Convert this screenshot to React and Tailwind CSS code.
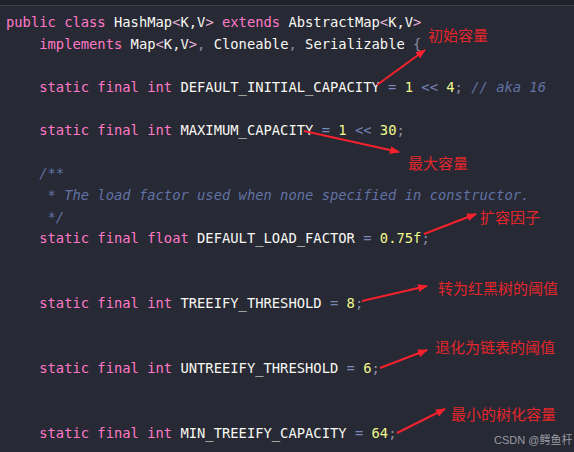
const K = "text-[#ff79c6]";
const I = "text-[#f8f8f2]";
const B = "text-[#e9b6d6]";
const P = "text-[#8b8fa3]";
const O = "text-[#7a86b8]";
const N = "text-[#f1fa8c]";
const C = "text-[#6272a4] italic";

const code = [
  [["public class ", K], ["HashMap", I], ["<", B], ["K,V", I], [">", B], [" extends ", K], ["AbstractMap", I], ["<", B], ["K,V", I], [">", B]],
  [["    implements ", K], ["Map", I], ["<", B], ["K,V", I], [">", B], [", ", P], ["Cloneable", I], [", ", P], ["Serializable ", I], ["{", P]],
  [],
  [["    static final int ", K], ["DEFAULT_INITIAL_CAPACITY ", I], ["= ", O], ["1 ", N], ["<< ", O], ["4", N], ["; ", P], ["// aka 16", C]],
  [],
  [["    static final int ", K], ["MAXIMUM_CAPACITY ", I], ["= ", O], ["1 ", N], ["<< ", O], ["30", N], [";", P]],
  [],
  [["    /**", C]],
  [["     * The load factor used when none specified in constructor.", C]],
  [["     */", C]],
  [["    static final float ", K], ["DEFAULT_LOAD_FACTOR ", I], ["= ", O], ["0.75f", N], [";", P]],
  [],
  [],
  [["    static final int ", K], ["TREEIFY_THRESHOLD ", I], ["= ", O], ["8", N], [";", P]],
  [],
  [],
  [["    static final int ", K], ["UNTREEIFY_THRESHOLD ", I], ["= ", O], ["6", N], [";", P]],
  [],
  [],
  [["    static final int ", K], ["MIN_TREEIFY_CAPACITY ", I], ["= ", O], ["64", N], [";", P]],
];

const notes = [
  { text: "初始容量", cls: "left-[428px] top-[25px]" },
  { text: "最大容量", cls: "left-[408px] top-[153px]" },
  { text: "扩容因子", cls: "left-[480px] top-[207px]" },
  { text: "转为红黑树的阈值", cls: "left-[438px] top-[278px]" },
  { text: "退化为链表的阈值", cls: "left-[435px] top-[337px]" },
  { text: "最小的树化容量", cls: "left-[451px] top-[404px]" },
];

const arrows = [
  [377, 85, 425, 50],
  [304, 131, 399, 152],
  [424, 234, 476, 214],
  [362, 301, 427, 286],
  [380, 368, 427, 350],
  [397, 433, 445, 409],
];

export default function App() {
  return (
    <div className="relative w-[574px] h-[452px] overflow-hidden bg-[#272935]">
      <div className="h-[6px] bg-[#1f2028] border-b border-[#3a3c47]" />
      <div className="pt-[6px] pl-[6px] font-['DejaVu_Sans_Mono',monospace] text-[13.8px] leading-[21.63px] whitespace-pre">
        {code.map((line, i) => (
          <div key={i} className="h-[21.63px]">
            {line.map(([t, c], j) => (
              <span key={j} className={c}>{t}</span>
            ))}
          </div>
        ))}
      </div>

      <svg className="absolute inset-0" width="574" height="452">
        <defs>
          <marker id="ah" markerWidth="10" markerHeight="8" refX="9" refY="4" orient="auto" markerUnits="userSpaceOnUse">
            <path d="M0,0 L10,4 L0,8 Z" fill="#f5222d" />
          </marker>
        </defs>
        {arrows.map(([x1, y1, x2, y2], i) => (
          <line key={i} x1={x1} y1={y1} x2={x2} y2={y2} stroke="#f5222d" strokeWidth="2" markerEnd="url(#ah)" />
        ))}
      </svg>

      {notes.map((n, i) => (
        <div key={i} className={`absolute ${n.cls} text-[15px] leading-[20px] text-[#e3262a] font-['Noto_Sans_CJK_SC',sans-serif]`}>
          {n.text}
        </div>
      ))}

      <div className="absolute left-[494px] top-[432px] whitespace-nowrap text-[11px] leading-[16px] text-[#9a9ba3] font-['Liberation_Sans','Noto_Sans_CJK_SC',sans-serif]">
        CSDN @鳄鱼杆
      </div>
    </div>
  );
}
